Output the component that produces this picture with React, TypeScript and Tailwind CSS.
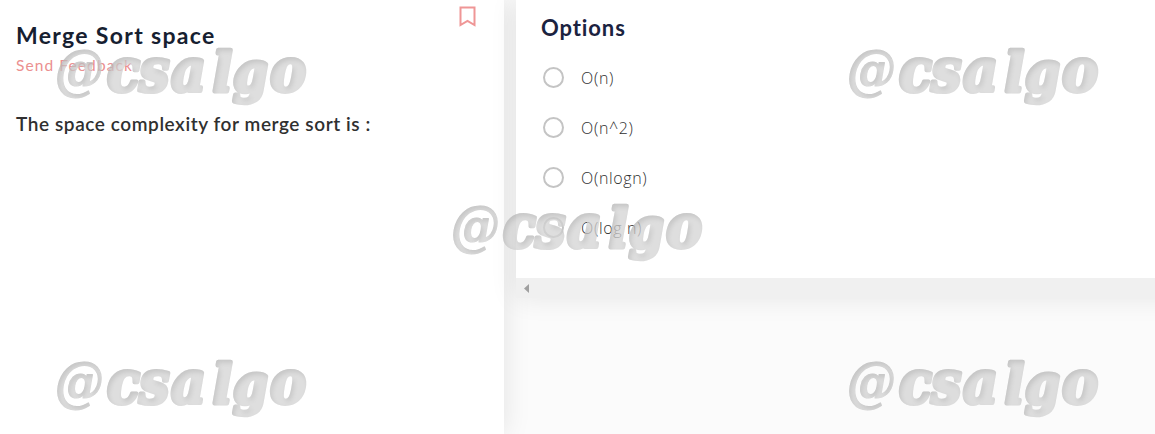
import React from "react";

const options = ["O(n)", "O(n^2)", "O(nlogn)", "O(log n)"];

function Watermark() {
  return (
    <svg className="h-[90px] w-[290px] overflow-visible" viewBox="0 0 290 90" aria-hidden="true">
      <defs>
        <filter id="inset" x="-5%" y="-5%" width="110%" height="110%">
          <feGaussianBlur in="SourceAlpha" stdDeviation="2.5" result="blur" />
          <feOffset in="blur" dx="2" dy="3" result="moved" />
          <feComposite in="SourceAlpha" in2="moved" operator="out" result="edge" />
          <feFlood floodColor="#777777" floodOpacity="0.45" />
          <feComposite in2="edge" operator="in" result="shade" />
          <feMerge>
            <feMergeNode in="SourceGraphic" />
            <feMergeNode in="shade" />
          </feMerge>
        </filter>
      </defs>
      <g filter="url(#inset)" opacity="0.75">
        <text
          fill="#d4d4d4"
          stroke="#d4d4d4"
          strokeLinejoin="round"
          className="font-['DejaVu_Serif_Condensed','DejaVu_Serif',serif] text-[60px] font-bold italic"
        >
          <tspan x="7" y="54" strokeWidth="1.2" className="text-[54px]">@</tspan>
          <tspan x="59 91 123" y="56" strokeWidth="4">csa</tspan>
          <tspan x="165 185" y="56" strokeWidth="4.5" className="text-[55px]">lg</tspan>
          <tspan x="222" y="56" strokeWidth="4">o</tspan>
        </text>
      </g>
    </svg>
  );
}

export default function App() {
  return (
    <div className="relative flex h-[434px] w-full gap-3 overflow-hidden bg-[#fbfbfb] font-['Lato',sans-serif]">
      <section className="flex w-[504px] shrink-0 items-start justify-between bg-white pl-4 pr-7 shadow-[0_0_26px_rgba(0,0,0,0.1)]">
        <div className="flex flex-col whitespace-nowrap pt-[22px]">
          <h1 className="text-[23px] font-bold leading-[26px] tracking-[1.32px] text-[#162030]">
            Merge Sort space
          </h1>
          <a className="pt-[7px] text-[15.5px] leading-5 tracking-[1.1px] text-[#eb9090]">Send Feedback</a>
          <p className="pt-[37px] text-[19px] font-semibold leading-6 tracking-[0.58px] text-[#303030]">
            The space complexity for merge sort is :
          </p>
        </div>
        <svg className="mt-[6px] h-[21px] w-[17px]" viewBox="0 0 17 21" fill="none">
          <path d="M1.5 1.5H15.5V19L8.5 14.8L1.5 19Z" stroke="#ef9696" strokeWidth="2" />
        </svg>
      </section>
      <main className="-mr-10 min-w-0 flex-1">
        <div className="shadow-[0_0_26px_rgba(0,0,0,0.09)]">
          <div className="flex h-[278px] flex-col gap-[11px] bg-white pl-[25px] pt-[15px]">
            <h2 className="text-[22px] font-bold leading-[26px] tracking-[0.9px] text-[#1b2340]">Options</h2>
            <div>
              {options.map((option) => (
                <label key={option} className="flex h-[50px] items-center gap-[17px] pl-[2px]">
                  <span className="size-[21px] shrink-0 rounded-full border-2 border-[#c4c4c4]" />
                  <span className="pt-px font-['Open_Sans',sans-serif] text-[16px] font-light tracking-[0.65px] text-[#303030]">
                    {option}
                  </span>
                </label>
              ))}
            </div>
          </div>
          <div className="flex h-5 items-center bg-[#f0f0f0] pl-2">
            <svg className="h-[9px] w-[5px]" viewBox="0 0 5 9">
              <path d="M5 0V9L0 4.5Z" fill="#a0a0a0" />
            </svg>
          </div>
        </div>
      </main>
      <div className="pointer-events-none absolute inset-0 flex flex-col gap-[66px] pl-12 pr-[25px] pt-[35px]">
        <div className="flex justify-between">
          <Watermark />
          <Watermark />
        </div>
        <div className="flex justify-center">
          <Watermark />
        </div>
        <div className="flex justify-between">
          <Watermark />
          <Watermark />
        </div>
      </div>
    </div>
  );
}
